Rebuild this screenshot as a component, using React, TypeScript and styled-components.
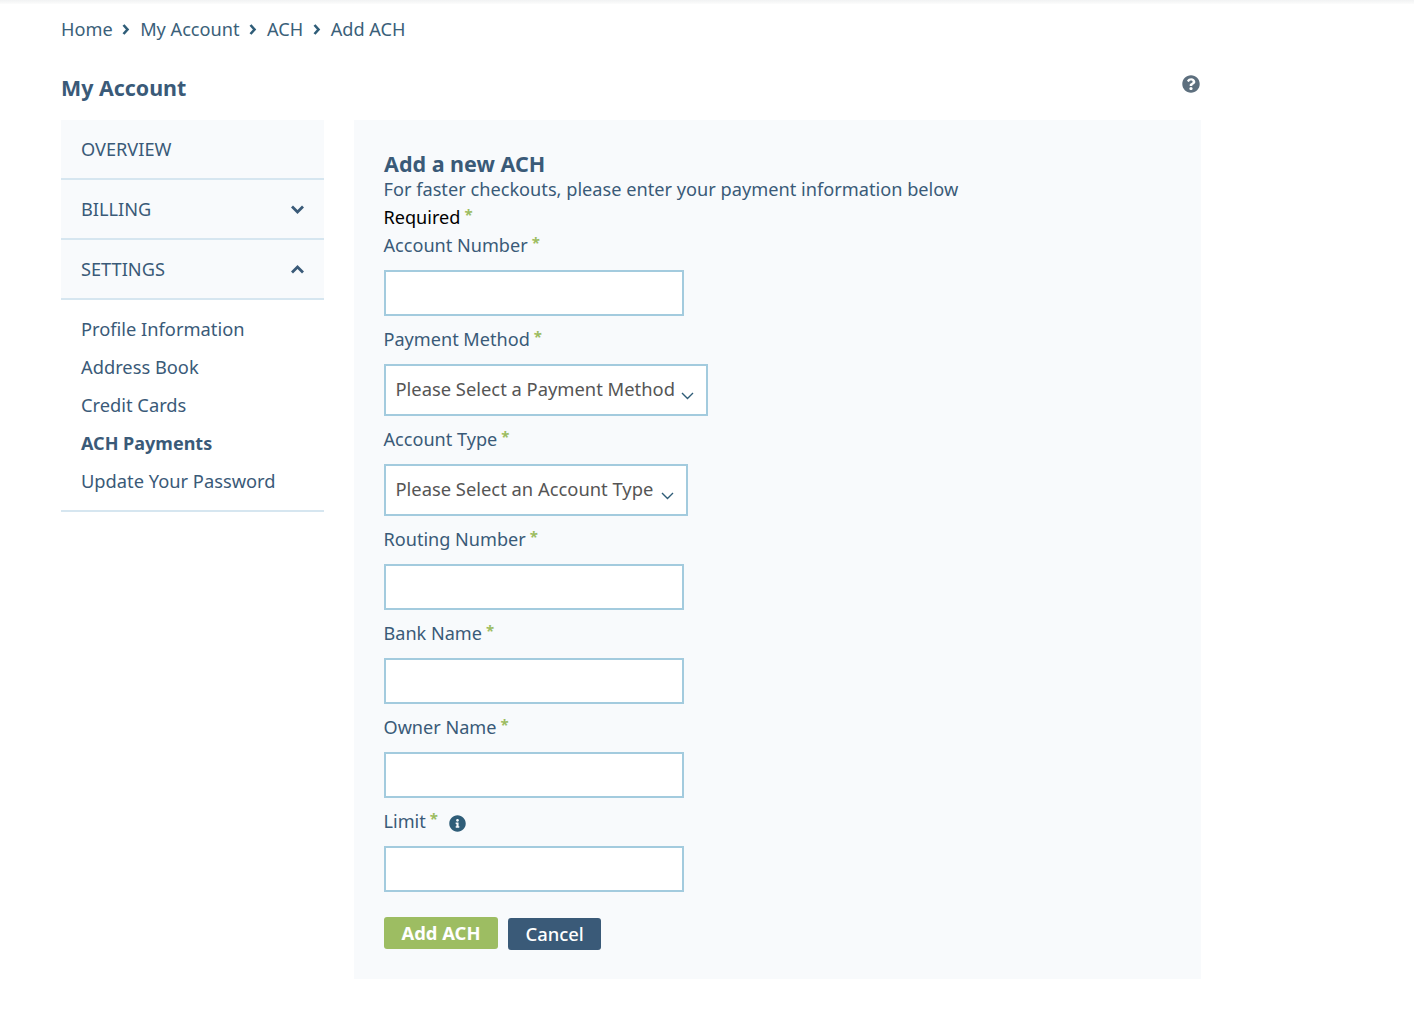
import React from "react";
import styled, { createGlobalStyle } from "styled-components";
import { FaInfoCircle, FaQuestionCircle } from "react-icons/fa";

const Global = createGlobalStyle`
  html, body { margin: 0; padding: 0; background: #fff; }
  body { font-family: "Noto Sans", "Open Sans", sans-serif; color: #3a5a78; }
  * { box-sizing: border-box; }
`;

const TopShade = styled.div`
  height: 4px;
  background: linear-gradient(#f1f2f3, #fcfcfc);
`;
const Page = styled.div`
  width: 1140px;
  margin-left: 61px;
  padding-bottom: 53px;
`;
const Crumbs = styled.nav`
  display: flex;
  align-items: center;
  height: 50px;
  font-size: 18.15px;
  color: #3a6079;
`;
const Crumb = styled.span``;
const CrumbSep = styled.svg`
  flex: none;
  margin: 1px 10px 0 9.5px;
`;
const Header = styled.header`
  display: flex;
  justify-content: space-between;
  height: 66px;
  padding-top: 20px;
`;
const Title = styled.h1`
  margin: 0;
  font-size: 21.4px;
  line-height: 28px;
  font-weight: 700;
  color: #3a5a78;
`;
const HelpIcon = styled.span`
  display: flex;
  font-size: 18px;
  color: #5d6f7e;
  margin-top: 1px;
  padding-right: 1px;
`;
const Columns = styled.div`
  display: flex;
  gap: 30px;
  align-items: flex-start;
`;
const Sidebar = styled.aside`
  width: 263px;
  flex: none;
`;
const NavHead = styled.div`
  display: flex;
  align-items: center;
  justify-content: space-between;
  height: 60px;
  padding: 0 20px;
  background: #f8fafc;
  border-bottom: 2px solid #d6e6f0;
  font-size: 18.2px;
  color: #3a5a78;
`;
const NavIcon = styled.svg`
  flex: none;
`;
const SubNav = styled.div`
  padding: 10px 20px;
  border-bottom: 2px solid #d6e6f0;
`;
const SubLink = styled.div<{ $active?: boolean }>`
  height: 38px;
  line-height: 38px;
  font-size: ${(p) => (p.$active ? 18 : 18.3)}px;
  font-weight: ${(p) => (p.$active ? 700 : 400)};
  color: #3a5a78;
`;
const Panel = styled.main`
  width: 847px;
  height: 859px;
  padding: 30px;
  background: #f8fafc;
`;
const PanelTitle = styled.h2`
  margin: 0 0 -3px;
  font-size: 21.5px;
  line-height: 27px;
  font-weight: 700;
  color: #3a5a78;
  padding-bottom: 1px;
`;
const Intro = styled.p`
  margin: 0 0 0 -0.5px;
  font-size: 18.2px;
  line-height: 28px;
  color: #3a5a78;
`;
const Label = styled.label<{ $dark?: boolean }>`
  display: flex;
  align-items: center;
  height: 28px;
  margin-left: -0.5px;
  font-size: 18.1px;
  color: ${(p) => (p.$dark ? "#000" : "#3a5a78")};
`;
const Star = styled.span`
  align-self: flex-start;
  margin-left: 4px;
  font-size: 15px;
  font-weight: 700;
  line-height: 23px;
  color: #9dbd62;
`;
const InfoIcon = styled.span`
  display: flex;
  margin-left: 11px;
  margin-top: 4px;
  font-size: 17px;
  color: #2f5d78;
`;
const Field = styled.div`
  margin-bottom: 9px;
`;
const Input = styled.input`
  display: block;
  width: 300px;
  height: 46px;
  margin-top: 11px;
  background: #fff;
  border: 2px solid #a3cbde;
  outline: none;
`;
const SelectBox = styled.div<{ $width: number }>`
  display: flex;
  align-items: center;
  justify-content: space-between;
  width: ${(p) => p.$width}px;
  height: 52px;
  margin-top: 11px;
  padding: 0 12px 4px 9.5px;
  background: #fff;
  border: 2px solid #a3cbde;
  font-size: 18.35px;
  color: #555;
`;
const Caret = styled.svg`
  margin-top: 15px;
`;
const Actions = styled.div`
  display: flex;
  align-items: flex-start;
  gap: 10px;
  margin-top: 25px;
`;
const Button = styled.button<{ $primary?: boolean }>`
  height: 32px;
  margin-top: ${(p) => (p.$primary ? 0 : 1)}px;
  padding: 0 17.5px 2px;
  border: none;
  border-radius: 3px;
  font-family: inherit;
  font-size: 18.4px;
  font-weight: ${(p) => (p.$primary ? 700 : 500)};
  color: #fff;
  background: ${(p) => (p.$primary ? "#9dbd62" : "#3a5a78")};
`;

const Required = () => <Star>*</Star>;

const Separator = () => (
  <CrumbSep width="8" height="11" viewBox="0 0 8 11" fill="none" stroke="#2f5d78" strokeWidth="2.6">
    <path d="M1.5 1l4 4.5-4 4.5" />
  </CrumbSep>
);

const Chevron = ({ up }: { up?: boolean }) => (
  <NavIcon width="13" height="9" viewBox="0 0 13 9" fill="none" stroke="#3a5a78" strokeWidth="2.8">
    <path d={up ? "M1 7.5l5.5-5.5 5.5 5.5" : "M1 1.5l5.5 5.5 5.5-5.5"} />
  </NavIcon>
);

const TextField = ({ label, info }: { label: string; info?: boolean }) => (
  <Field>
    <Label>
      {label}
      <Required />
      {info && (
        <InfoIcon>
          <FaInfoCircle />
        </InfoIcon>
      )}
    </Label>
    <Input />
  </Field>
);

const SelectField = ({ label, text, width }: { label: string; text: string; width: number }) => (
  <Field>
    <Label>
      {label}
      <Required />
    </Label>
    <SelectBox $width={width}>
      {text}
      <Caret width="13" height="8" viewBox="0 0 13 8" fill="none" stroke="#2f5d78" strokeWidth="1.4">
        <path d="M1 1l5.5 5.5L12 1" />
      </Caret>
    </SelectBox>
  </Field>
);

export default function App() {
  return (
    <>
      <Global />
      <TopShade />
      <Page>
        <Crumbs>
          <Crumb>Home</Crumb>
          <Separator />
          <Crumb>My Account</Crumb>
          <Separator />
          <Crumb>ACH</Crumb>
          <Separator />
          <Crumb>Add ACH</Crumb>
        </Crumbs>
        <Header>
          <Title>My Account</Title>
          <HelpIcon><FaQuestionCircle /></HelpIcon>
        </Header>
        <Columns>
          <Sidebar>
            <NavHead>OVERVIEW</NavHead>
            <NavHead>
              BILLING
              <Chevron />
            </NavHead>
            <NavHead>
              SETTINGS
              <Chevron up />
            </NavHead>
            <SubNav>
              <SubLink>Profile Information</SubLink>
              <SubLink>Address Book</SubLink>
              <SubLink>Credit Cards</SubLink>
              <SubLink $active>ACH Payments</SubLink>
              <SubLink>Update Your Password</SubLink>
            </SubNav>
          </Sidebar>
          <Panel>
            <PanelTitle>Add a new ACH</PanelTitle>
            <Intro>For faster checkouts, please enter your payment information below</Intro>
            <Label $dark>
              Required
              <Required />
            </Label>
            <TextField label="Account Number" />
            <SelectField label="Payment Method" text="Please Select a Payment Method" width={324} />
            <SelectField label="Account Type" text="Please Select an Account Type" width={304} />
            <TextField label="Routing Number" />
            <TextField label="Bank Name" />
            <TextField label="Owner Name" />
            <TextField label="Limit" info />
            <Actions>
              <Button $primary>Add ACH</Button>
              <Button>Cancel</Button>
            </Actions>
          </Panel>
        </Columns>
      </Page>
    </>
  );
}
